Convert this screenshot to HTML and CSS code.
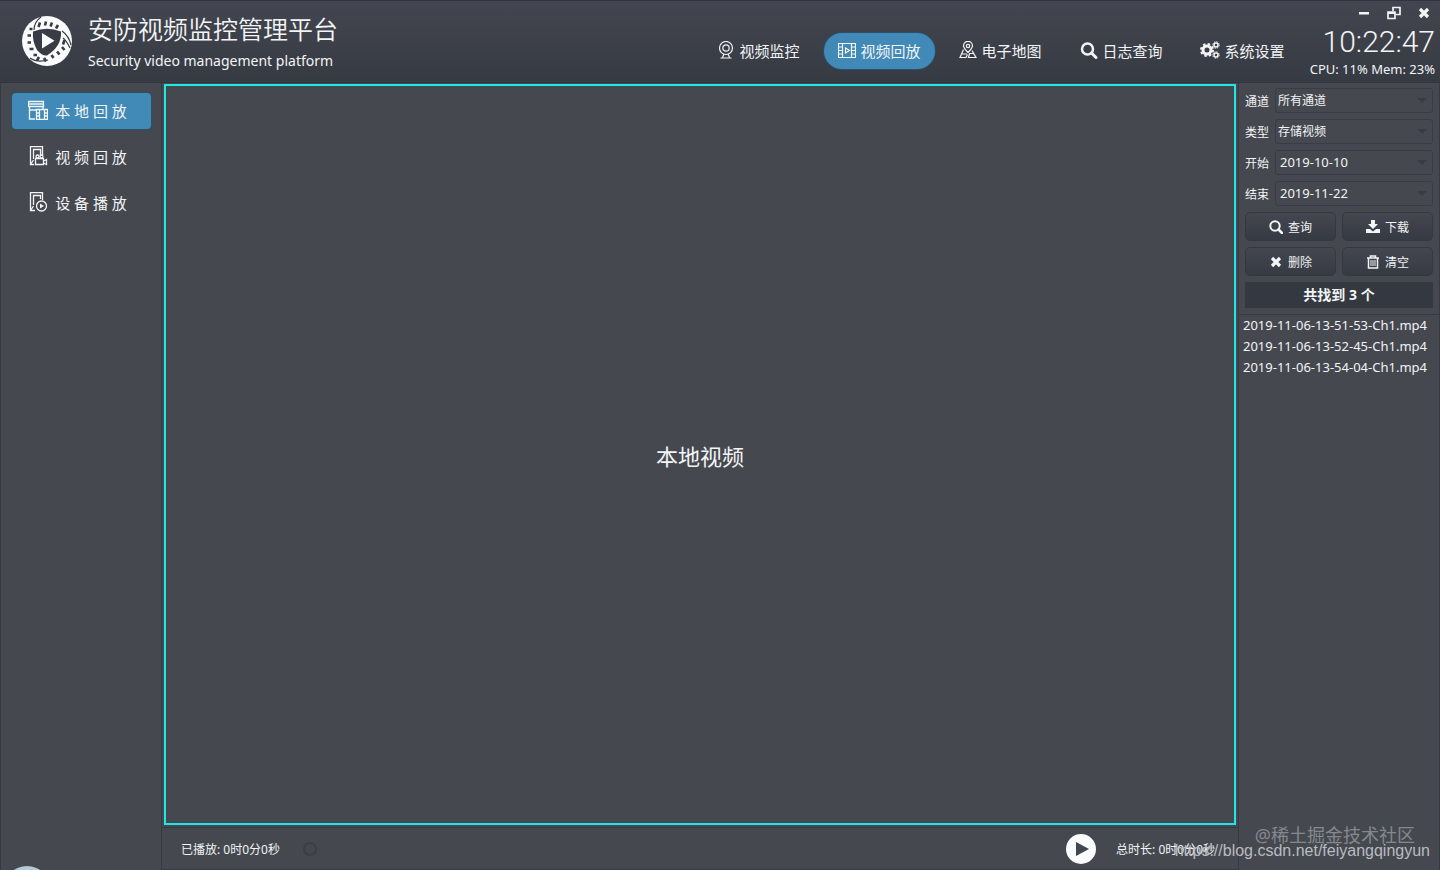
FILE: index.html
```html
<!DOCTYPE html>
<html lang="zh-CN">

<head>
    <meta charset="UTF-8">
    <meta name="viewport" content="width=device-width, initial-scale=1.0">
    <title>安防视频监控管理平台</title>
    <link rel="stylesheet" href="styles.css">
</head>

<body>

    <header class="header">
        <svg class="logo" viewBox="0 0 50 50">
            <circle cx="25" cy="25" r="25" fill="#fafcfd" />
            <path d="M11 15.500Q25 10 39 15.500Q40 30 25 39.500Q20 40 15 34Q10 25 11 15.500Z" fill="#383c45" />
            <path d="M20 17L32.500 24.700L20 32.500Z" fill="#fafcfd" />
            <path d="M12 14Q12 6 19 1M40 15Q47 20 49 29M41 22Q44 24 48 32M8 42Q15 47 26 44" fill="none" stroke="#383c45" stroke-width="1.200" />
            <g fill="none" stroke="#383c45" stroke-width="2.600">
                <path d="M18 6.500L16.500 11M24 5.500L23 9.500M30 6.500L28.500 10.500M36 9L34 12.500" />
                <path d="M7.500 13H10.500M5.500 19.500H9M5.500 26.500H9M7.500 33H11.500M11.500 39H15" />
                <path d="M42.500 24L41 28.500M40 31L42.500 34M35 35.500L37.500 38.500M29.500 39L31.500 42M22 42L24 45.500M17 41L15 44.500" />
            </g>
        </svg>
        <div class="brand">
            <h1>安防视频监控管理平台</h1>
            <p>Security video management platform</p>
        </div>

        <nav class="nav">
            <button class="nav-item">
                <svg viewBox="0 0 18 18" fill="none" stroke="currentColor" stroke-width="1.200">
                    <circle cx="9" cy="7" r="6.500" />
                    <circle cx="9" cy="7" r="3.200" />
                    <path d="M7 13L5.500 16.500M11 13L12.500 16.500M3.500 17H14.500" />
                </svg>
                视频监控
            </button>
            <button class="nav-item active">
                <svg viewBox="0 0 18 18" fill="none" stroke="currentColor" stroke-width="1.200">
                    <path d="M.5 2.500H17.500V16.500H.5ZM4.500 2.500V16.500M13.500 2.500V16.500M.5 6H4M.5 9.500H4M.5 13H4M14 6H17M14 9.500H17M14 13H17" />
                    <path d="M7.500 7L11.500 9.500L7.500 12Z" />
                </svg>
                视频回放
            </button>
            <button class="nav-item">
                <svg viewBox="0 0 18 18" fill="none" stroke="currentColor" stroke-width="1.200">
                    <path d="M9 11.500Q4.500 7 4.500 4.800A4.300 4.300 0 0 1 13.500 4.800Q13.500 7 9 11.500Z" />
                    <circle cx="9" cy="5" r="1.700" />
                    <path d="M4.500 8.500L1 16.500H7L8.500 13.500M13 9.500L17 16.500H9.500L10.500 12.500H15M2.500 13H8" />
                </svg>
                电子地图
            </button>
            <button class="nav-item">
                <svg viewBox="0 0 18 18" fill="none" stroke="currentColor">
                    <circle cx="7.500" cy="8" r="5.500" stroke-width="2.500" />
                    <path d="M12 12.500L16 16.500" stroke-width="3" stroke-linecap="round" />
                </svg>
                日志查询
            </button>
            <button class="nav-item">
                <svg class="gears" viewBox="0 0 20 18" fill="none" stroke="currentColor">
                    <circle cx="7" cy="9" r="4" stroke-width="3" />
                    <circle cx="7" cy="9" r="6" stroke-width="2" stroke-dasharray="2.500 2.200" />
                    <circle cx="16" cy="4" r="2" stroke-width="1.500" />
                    <circle cx="16" cy="4" r="3.200" stroke-dasharray="1.500 1" />
                    <circle cx="16" cy="14" r="2" stroke-width="1.500" />
                    <circle cx="16" cy="14" r="3.200" stroke-dasharray="1.500 1" />
                </svg>
                系统设置
            </button>
        </nav>

        <div class="status">
            <div class="window-buttons">
                <button aria-label="最小化">
                    <svg viewBox="0 0 14 14"><path d="M2 6H12V8.500H2Z" fill="currentColor" /></svg>
                </button>
                <button aria-label="还原">
                    <svg viewBox="0 0 14 14" fill="none" stroke="currentColor" stroke-width="1.700">
                        <path d="M6 5V1.500H13V8.500H9" />
                        <path d="M1 6H8V12.500H1Z" />
                        <path d="M1 7H8" stroke-width="2" />
                    </svg>
                </button>
                <button aria-label="关闭">
                    <svg viewBox="0 0 14 14"><path d="M3 3L11 11M11 3L3 11" stroke="currentColor" stroke-width="3.200" /></svg>
                </button>
            </div>
            <time class="clock">10:22:47</time>
            <div class="usage">CPU: 11% Mem: 23%</div>
        </div>
    </header>

    <div class="content">
        <aside class="sidebar">
            <button class="side-item active">
                <svg viewBox="0 0 20 20" fill="none" stroke="currentColor" stroke-width="1.300">
                    <path d="M.5 1.500H15.500V6.500H.5ZM.5 4H15.500M1.500 6.500V19H7M1.500 10H8M15 6.500V9" />
                    <path d="M8.500 9.500H19.500V19.500H8.500ZM11.500 9.500V19.500M16.500 9.500V19.500M8.500 13H11.500M8.500 16H11.500M16.500 13H19.500M16.500 16H19.500" />
                </svg>
                本 地 回 放
            </button>
            <button class="side-item">
                <svg viewBox="0 0 20 20" fill="none" stroke="currentColor" stroke-width="1.300">
                    <path d="M14.500 9V.7H2.500V18.500H6M12.500 9V3.500H5.500V13M2.500 18.500L5.500 14" />
                    <path d="M7.500 12.500H15.500V18.500H7.500ZM15.500 15L18.500 13.500V18.500L15.500 17" />
                    <circle cx="9.500" cy="10.500" r="1.500" />
                    <circle cx="13.500" cy="10.500" r="1.500" />
                </svg>
                视 频 回 放
            </button>
            <button class="side-item">
                <svg viewBox="0 0 20 20" fill="none" stroke="currentColor" stroke-width="1.300">
                    <path d="M14.500 8V.7H2.500V18.500H7M12.500 7V3.500H5.500V13M2.500 18.500L5.500 14" />
                    <circle cx="13.500" cy="14" r="5" />
                    <path d="M12 11.500L16 14L12 16.500Z" fill="currentColor" stroke="none" />
                </svg>
                设 备 播 放
            </button>
            <span class="float-ball"></span>
        </aside>

        <main class="main">
            <div class="video">本地视频</div>
            <div class="player-bar">
                <label for="progress">已播放: 0时0分0秒</label>
                <input type="range" id="progress" class="progress" min="0" max="100" value="0">
                <button class="play" aria-label="播放">
                    <svg viewBox="0 0 30 30">
                        <circle cx="15" cy="15" r="15" fill="#fafcfd" />
                        <path d="M10 8L23 15L10 22Z" fill="#42464e" />
                    </svg>
                </button>
                <span class="total">总时长: 0时0分0秒</span>
            </div>
        </main>

        <aside class="panel">
            <form class="filters">
                <label for="channel">通道</label>
                <div class="field">
                    <select id="channel"><option>所有通道</option></select>
                </div>
                <label for="type">类型</label>
                <div class="field">
                    <select id="type"><option>存储视频</option></select>
                </div>
                <label for="start">开始</label>
                <div class="field">
                    <select id="start" class="date"><option>2019-10-10</option></select>
                </div>
                <label for="end">结束</label>
                <div class="field">
                    <select id="end" class="date"><option>2019-11-22</option></select>
                </div>
            </form>

            <div class="actions">
                <button>
                    <svg viewBox="0 0 14 14" fill="none" stroke="currentColor">
                        <circle cx="6" cy="6" r="4.700" stroke-width="2" />
                        <path d="M9.500 9.500L13 13" stroke-width="2.500" stroke-linecap="round" />
                    </svg>
                    查询
                </button>
                <button>
                    <svg viewBox="0 0 14 14" fill="currentColor">
                        <path d="M5 0H9V4H12L7 9L2 4H5Z" />
                        <path d="M0 9H4L7 11.500L10 9H14V13H0Z" />
                    </svg>
                    下载
                </button>
                <button>
                    <svg viewBox="0 0 14 14"><path d="M3 3L11 11M11 3L3 11" stroke="currentColor" stroke-width="3.200" /></svg>
                    删除
                </button>
                <button>
                    <svg viewBox="0 0 14 14" fill="none" stroke="currentColor">
                        <path d="M1 3H13M4.500 3V1H9.500V3M2.500 3V13H11.500V3" stroke-width="1.500" />
                        <path d="M5 5V11M7 5V11M9 5V11" />
                    </svg>
                    清空
                </button>
            </div>

            <div class="count">共找到 3 个</div>

            <ul class="files">
                <li>2019-11-06-13-51-53-Ch1.mp4</li>
                <li>2019-11-06-13-52-45-Ch1.mp4</li>
                <li>2019-11-06-13-54-04-Ch1.mp4</li>
            </ul>
        </aside>
    </div>

    <div class="watermark community">@稀土掘金技术社区</div>
    <div class="watermark blog">https://blog.csdn.net/feiyangqingyun</div>

</body>

</html>
```
FILE: styles.css
```css
* {
    box-sizing: border-box;
}

body {
    margin: 0;
    height: 100vh;
    display: flex;
    flex-direction: column;
    position: relative;
    overflow: hidden;
    background-color: #45484f;
    color: #f2f4f6;
    font-family: "Noto Sans", "Noto Sans CJK SC", sans-serif;
    font-size: 12px;
}

button,
select {
    font: inherit;
    color: inherit;
    cursor: pointer;
}

button {
    display: flex;
    align-items: center;
    justify-content: center;
    padding: 0;
    border: none;
    background: none;
    white-space: nowrap;
}

svg {
    display: block;
    flex: none;
}

/* header */
.header {
    display: flex;
    flex: none;
    height: 83px;
    padding-left: 22px;
    border-top: 1px solid #30343c;
    border-bottom: 1px solid #31353d;
    background: linear-gradient(#434650, #363a42);
}

.logo {
    width: 50px;
    height: 50px;
    margin-top: 15px;
}

.brand {
    margin: 10px 0 0 16px;
}

.brand h1 {
    margin: 0;
    font-family: "Noto Sans CJK SC", sans-serif;
    font-size: 25px;
    font-weight: 350;
    line-height: 34px;
}

.brand p {
    margin: 4px 0 0;
    font-size: 14px;
    line-height: 24px;
}

.nav {
    display: flex;
    gap: 10px;
    margin: 32px 16px 0 auto;
}

.nav-item {
    gap: 4px;
    width: 111px;
    height: 36px;
    padding-bottom: 2px;
    border-radius: 18px;
    font-size: 15px;
}

.nav-item svg {
    width: 18px;
    height: 18px;
}

.nav-item .gears {
    width: 20px;
}

.nav-item.active,
.side-item.active {
    background-color: #4189b6;
    box-shadow: 0 0 0 1px #2c5068;
}

.status {
    display: flex;
    flex-direction: column;
    align-items: flex-end;
    width: 126px;
    padding: 5px 5px 0 0;
}

.window-buttons {
    display: flex;
    gap: 16px;
    padding-right: 4px;
}

.window-buttons button,
.window-buttons svg {
    width: 14px;
    height: 14px;
}

.clock {
    margin-top: 4px;
    font-family: Roboto, sans-serif;
    font-size: 30px;
    font-weight: 300;
    line-height: 36px;
}

.usage {
    font-size: 13px;
    line-height: 18px;
    white-space: nowrap;
}

.content {
    display: flex;
    flex: 1;
    min-height: 0;
}

/* sidebar */
.sidebar {
    position: relative;
    display: flex;
    flex-direction: column;
    gap: 10px;
    width: 162px;
    padding: 10px 10px 0 11px;
    border-right: 1px solid #363a42;
    border-left: 1px solid #363a42;
    overflow: hidden;
}

.side-item {
    gap: 7px;
    height: 36px;
    padding: 0 8px 2px 0;
    border-radius: 4px;
    font-size: 15px;
}

.side-item svg {
    width: 20px;
    height: 20px;
}

.float-ball {
    position: absolute;
    left: 3px;
    bottom: -42px;
    width: 46px;
    height: 46px;
    border-radius: 50%;
    background-color: #b5cad8;
}

/* video */
.main {
    display: flex;
    flex: 1;
    flex-direction: column;
    min-width: 0;
}

.video {
    display: flex;
    flex: 1;
    align-items: center;
    justify-content: center;
    margin: 1px 2px 2px;
    border: 2px solid #20e6e6;
    font-size: 22px;
}

.player-bar {
    display: flex;
    align-items: center;
    height: 43px;
    padding: 0 23px 0 19px;
    border-top: 1px solid #363a42;
    border-bottom: 1px solid #363a42;
}

.progress {
    flex: 1;
    height: 14px;
    margin: 0 16px 0 23px;
    appearance: none;
    background: none;
}

.progress::-webkit-slider-thumb {
    width: 14px;
    height: 14px;
    appearance: none;
    border: 2px solid #3a3e46;
    border-radius: 50%;
    background-color: #45484f;
}

.play,
.play svg {
    width: 30px;
    height: 30px;
}

.total {
    margin-left: 20px;
}

/* right panel */
.panel {
    width: 202px;
    padding: 5px 0 0;
    border-left: 1px solid #363a42;
    border-right: 1px solid #363a42;
}

.filters {
    display: grid;
    grid-template-columns: 30px 1fr;
    gap: 6px 0;
    align-items: center;
    padding: 0 6px;
}

.field {
    position: relative;
    height: 25px;
}

.field::after {
    content: "";
    position: absolute;
    top: 10px;
    right: 6px;
    border: 5px solid transparent;
    border-top-color: #383c44;
    border-bottom: none;
    pointer-events: none;
}

.field select {
    width: 100%;
    height: 100%;
    padding: 0 2px;
    appearance: none;
    border: 1px solid #383c44;
    border-radius: 3px;
    background: none;
}

.field .date {
    padding: 0 4px 2px;
    font-size: 13px;
}

.actions {
    display: grid;
    grid-template-columns: 1fr 1fr;
    gap: 6px;
    padding: 6px;
}

.actions button {
    gap: 5px;
    height: 29px;
    border: 1px solid #343840;
    border-radius: 5px;
    background: linear-gradient(#444750, #363a42);
}

.actions svg {
    width: 14px;
    height: 14px;
}

.count {
    margin: 0 6px 6px;
    background-color: #343840;
    font-size: 14px;
    font-weight: bold;
    line-height: 26px;
    text-align: center;
}

.files {
    margin: 0;
    padding: 0 4px;
    border-top: 1px solid #363a42;
    list-style: none;
    font-size: 13px;
    line-height: 21px;
}

/* watermarks */
.watermark {
    position: absolute;
    pointer-events: none;
    white-space: nowrap;
}

.community {
    right: 25px;
    bottom: 22px;
    color: #85888f;
    font-size: 18px;
    line-height: 26px;
}

.blog {
    right: 10px;
    bottom: 8px;
    color: #b9bcc0;
    font-family: "Liberation Sans", sans-serif;
    font-size: 16px;
    line-height: 22px;
}
```
